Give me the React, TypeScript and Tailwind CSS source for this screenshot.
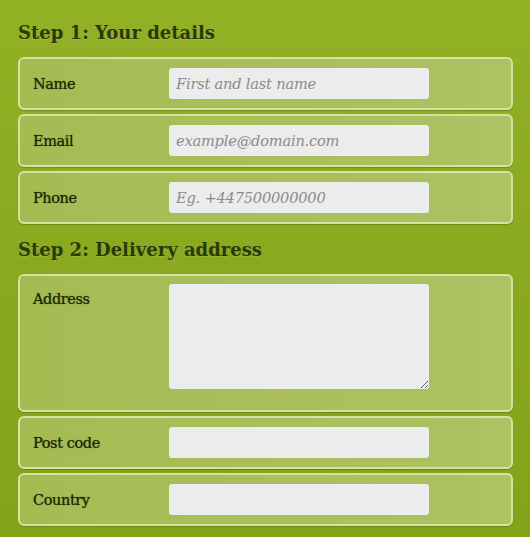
import type { ReactNode } from 'react'

const serif = { fontFamily: '"DejaVu Serif", Georgia, serif' }

function Row({ label, children, tall }: { label: string; children: ReactNode; tall?: boolean }) {
  return (
    <div
      className={`flex ${tall ? 'items-start pt-[8px] pb-[21px]' : 'items-center h-[53px]'} rounded-[6px] border-2 border-[#d3e3a0] bg-gradient-to-r from-[#a5bb52] to-[#adc263] shadow-[0_1px_1px_rgba(60,80,0,0.35)]`}
    >
      <label
        className={`w-[149px] shrink-0 pl-[13px] text-[14.5px] text-[#1a2604] tracking-[-0.4px] [text-shadow:0_0_1px_rgba(20,30,0,0.6)] ${tall ? 'pt-[5px]' : 'pt-[2px]'}`}
      >
        {label}
      </label>
      {children}
    </div>
  )
}

const inputCls =
  'w-[260px] h-[31px] rounded-[3px] bg-[#ececec] px-[7px] text-[14.6px] tracking-[-0.2px] italic text-[#555] placeholder:text-[#8b8b8b] outline-none'

export default function App() {
  return (
    <div
      className="w-[530px] h-[537px] overflow-hidden bg-gradient-to-b from-[#92b125] via-[#8aa91f] to-[#83a319] px-[18px] pt-[19px]"
      style={serif}
    >
      <h2 className="text-[18px] font-bold text-[#293a07] mb-[11px] [text-shadow:0_1px_0_rgba(255,255,255,0.15)]">
        Step 1: Your details
      </h2>
      <div className="flex flex-col gap-[4px] mr-[-1px]">
        <Row label="Name">
          <input className={inputCls} placeholder="First and last name" style={serif} />
        </Row>
        <Row label="Email">
          <input className={inputCls} placeholder="example@domain.com" style={serif} />
        </Row>
        <Row label="Phone">
          <input className={inputCls} placeholder="Eg. +447500000000" style={serif} />
        </Row>
      </div>
      <h2 className="text-[18px] font-bold text-[#293a07] mt-[12px] mb-[11px] [text-shadow:0_1px_0_rgba(255,255,255,0.15)]">
        Step 2: Delivery address
      </h2>
      <div className="flex flex-col gap-[4px] mr-[-1px]">
        <Row label="Address" tall>
          <textarea className="w-[260px] h-[105px] rounded-[3px] bg-[#ececec] outline-none" />
        </Row>
        <Row label="Post code">
          <input className={inputCls} style={serif} />
        </Row>
        <Row label="Country">
          <input className={inputCls} style={serif} />
        </Row>
      </div>
    </div>
  )
}
